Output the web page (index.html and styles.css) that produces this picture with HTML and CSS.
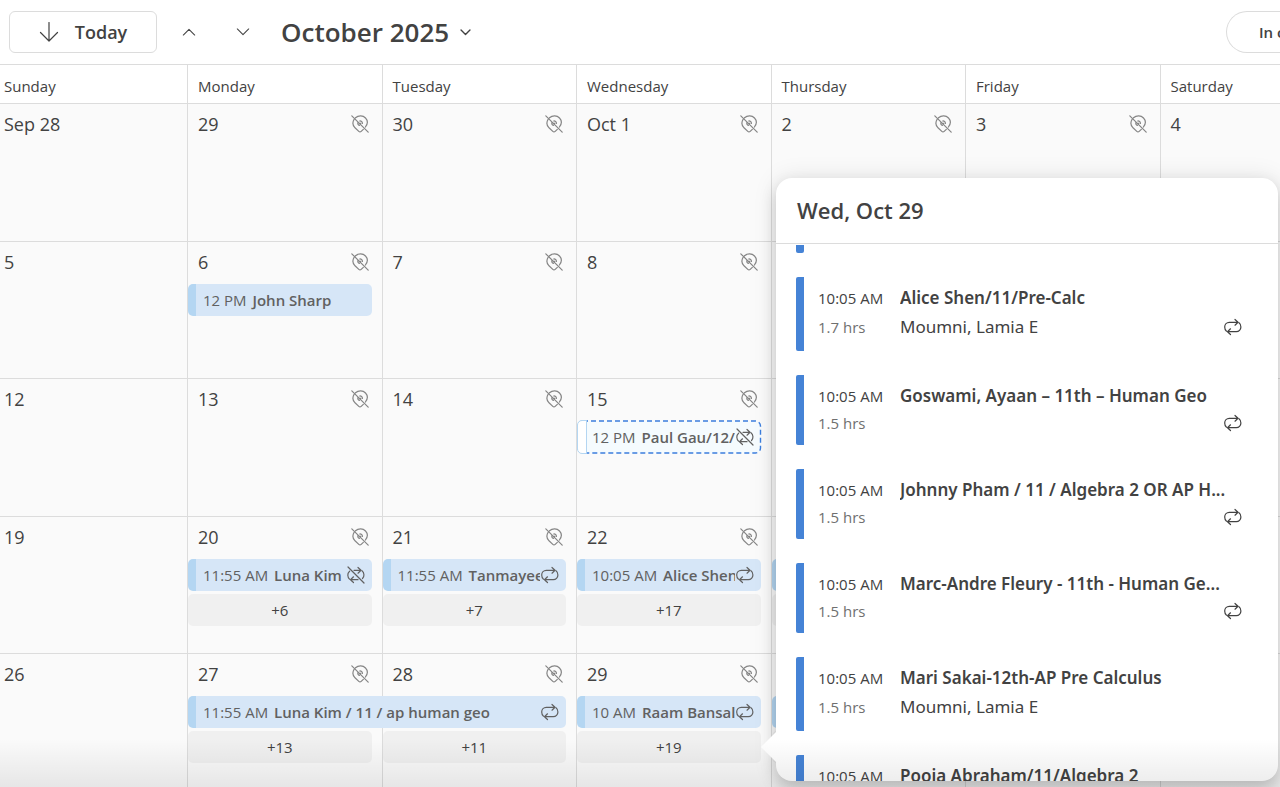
FILE: index.html
```html
<!DOCTYPE html>
<html lang="en">
<head>
<meta charset="utf-8">
<title>Calendar</title>
<link rel="stylesheet" href="styles.css">
</head>
<body>
<svg class="sprite" aria-hidden="true">
  <symbol id="repeat" viewBox="0 0 20 18"><path d="M3.5 13.2C2 12 1.7 10.5 1.7 9C1.7 6.300 3.700 4.300 6.300 4.300H14.500M12 1.500L15 4.300L12 7.200M16 4.800C17.500 6 17.900 7.500 17.900 9C17.900 11.700 15.900 13.700 13.300 13.700H5M7.500 10.800L4.500 13.700L7.500 16.500"/></symbol>
  <symbol id="repeat-off" viewBox="0 0 20 18"><path d="M2 1L18 17M3.500 13.200C1.500 11 1 7.500 3.600 5.200M8 4.300H14.500M12 1.500L15 4.300L12 7.200M16 4.800C18.500 7 18.500 10.500 16.500 12.500M12 13.700H5M7.500 10.800L4.500 13.700L7.500 16.500"/></symbol>
  <symbol id="pin-off" viewBox="0 0 18 18"><path d="M.8.8L17.200 17.200M4.500 2.800C7.500.2 12 .4 14.500 3C17 5.700 16.800 9 14.400 12M3 4.500C1 8 2 10.800 4 12.800L7.800 16.400C8.600 17.200 9.400 17.200 10.200 16.400L12.300 14.400M7 7.300C6.500 8.500 7 10 8.500 10.400M8.700 6C10 5.800 11.500 6.800 11.400 8.500M9 8.400L9.800 8.300"/></symbol>
  <symbol id="chevron" viewBox="0 0 16 16"><path d="M1.500 4.500L8 11L14.500 4.500"/></symbol>
  <symbol id="arrow" viewBox="0 0 20 20"><path d="M10 .5V19M1.500 10.500L10 19L18.500 10.500"/></symbol>
</svg>

<header class="toolbar">
  <button class="today"><svg class="icon arrow"><use href="#arrow"/></svg>Today</button>
  <button class="nav up" aria-label="Previous month"><svg class="icon chev"><use href="#chevron"/></svg></button>
  <button class="nav" aria-label="Next month"><svg class="icon chev"><use href="#chevron"/></svg></button>
  <button class="month">October 2025<svg class="icon chev-small"><use href="#chevron"/></svg></button>
  <button class="filter">In c</button>
</header>

<main class="calendar">
  <div class="weekdays">
    <div>Sunday</div><div>Monday</div><div>Tuesday</div><div>Wednesday</div><div>Thursday</div><div>Friday</div><div>Saturday</div>
  </div>

  <section class="week">
    <div class="day c1">Sep 28</div>
    <div class="day c2">29<svg class="icon pin"><use href="#pin-off"/></svg></div>
    <div class="day c3">30<svg class="icon pin"><use href="#pin-off"/></svg></div>
    <div class="day c4">Oct 1<svg class="icon pin"><use href="#pin-off"/></svg></div>
    <div class="day c5">2<svg class="icon pin"><use href="#pin-off"/></svg></div>
    <div class="day c6">3<svg class="icon pin"><use href="#pin-off"/></svg></div>
    <div class="day c7">4</div>
  </section>

  <section class="week">
    <div class="day c1">5</div>
    <div class="day c2">6<svg class="icon pin"><use href="#pin-off"/></svg></div>
    <div class="day c3">7<svg class="icon pin"><use href="#pin-off"/></svg></div>
    <div class="day c4">8<svg class="icon pin"><use href="#pin-off"/></svg></div>
    <div class="day c5"></div><div class="day c6"></div><div class="day c7"></div>
    <button class="event c2"><span class="label">12 PM <b>John Sharp</b></span></button>
  </section>

  <section class="week">
    <div class="day c1">12</div>
    <div class="day c2">13<svg class="icon pin"><use href="#pin-off"/></svg></div>
    <div class="day c3">14<svg class="icon pin"><use href="#pin-off"/></svg></div>
    <div class="day c4">15<svg class="icon pin"><use href="#pin-off"/></svg></div>
    <div class="day c5"></div><div class="day c6"></div><div class="day c7"></div>
    <button class="event tentative c4"><svg class="outline" aria-hidden="true"><rect width="100%" height="100%" rx="5"/></svg><span class="label">12 PM <b>Paul Gau/12/</b></span><svg class="icon repeat"><use href="#repeat-off"/></svg></button>
  </section>

  <section class="week">
    <div class="day c1">19</div>
    <div class="day c2">20<svg class="icon pin"><use href="#pin-off"/></svg></div>
    <div class="day c3">21<svg class="icon pin"><use href="#pin-off"/></svg></div>
    <div class="day c4">22<svg class="icon pin"><use href="#pin-off"/></svg></div>
    <div class="day c5"></div><div class="day c6"></div><div class="day c7"></div>
    <button class="event c2"><span class="label">11:55 AM <b>Luna Kim</b></span><svg class="icon repeat"><use href="#repeat-off"/></svg></button>
    <button class="event c3"><span class="label">11:55 AM <b>Tanmayee</b></span><svg class="icon repeat"><use href="#repeat"/></svg></button>
    <button class="event c4"><span class="label">10:05 AM <b>Alice Shen</b></span><svg class="icon repeat"><use href="#repeat"/></svg></button>
    <button class="event c5" aria-label="Event"></button>
    <button class="more c2">+6</button>
    <button class="more c3">+7</button>
    <button class="more c4">+17</button>
    <button class="more c5" aria-label="More events"></button>
  </section>

  <section class="week">
    <div class="day c1">26</div>
    <div class="day c2">27<svg class="icon pin"><use href="#pin-off"/></svg></div>
    <div class="day c3">28<svg class="icon pin"><use href="#pin-off"/></svg></div>
    <div class="day c4">29<svg class="icon pin"><use href="#pin-off"/></svg></div>
    <div class="day c5"></div><div class="day c6"></div><div class="day c7"></div>
    <button class="event c2 two-days"><span class="label">11:55 AM <b>Luna Kim / 11 / ap human geo</b></span><svg class="icon repeat"><use href="#repeat"/></svg></button>
    <button class="event c4"><span class="label">10 AM <b>Raam Bansal</b></span><svg class="icon repeat"><use href="#repeat"/></svg></button>
    <button class="event c5" aria-label="Event"></button>
    <button class="more c2">+13</button>
    <button class="more c3">+11</button>
    <button class="more c4">+19</button>
    <button class="more c5" aria-label="More events"></button>
  </section>
</main>

<aside class="popover" aria-labelledby="popover-title">
  <h2 id="popover-title">Wed, Oct 29</h2>
  <div class="agenda">
    <div class="item-end"></div>
    <article class="item">
      <span class="time">10:05 AM</span><h3>Alice Shen/11/Pre-Calc</h3>
      <span class="length">1.7 hrs</span><span class="place">Moumni, Lamia E</span>
      <svg class="icon repeat"><use href="#repeat"/></svg>
    </article>
    <article class="item short">
      <span class="time">10:05 AM</span><h3>Goswami, Ayaan – 11th – Human Geo</h3>
      <span class="length">1.5 hrs</span><svg class="icon repeat"><use href="#repeat"/></svg>
    </article>
    <article class="item short">
      <span class="time">10:05 AM</span><h3>Johnny Pham / 11 / Algebra 2 OR AP H...</h3>
      <span class="length">1.5 hrs</span><svg class="icon repeat"><use href="#repeat"/></svg>
    </article>
    <article class="item short">
      <span class="time">10:05 AM</span><h3>Marc-Andre Fleury - 11th - Human Ge...</h3>
      <span class="length">1.5 hrs</span><svg class="icon repeat"><use href="#repeat"/></svg>
    </article>
    <article class="item">
      <span class="time">10:05 AM</span><h3>Mari Sakai-12th-AP Pre Calculus</h3>
      <span class="length">1.5 hrs</span><span class="place">Moumni, Lamia E</span>
    </article>
    <article class="item">
      <span class="time">10:05 AM</span><h3>Pooja Abraham/11/Algebra 2</h3>
    </article>
  </div>
</aside>
<div class="shade"></div>
</body>
</html>
```

FILE: styles.css
```css
* { box-sizing: border-box; }

body {
  margin: 0;
  height: 100vh;
  display: flex;
  flex-direction: column;
  position: relative;
  overflow: hidden;
  background: #fff;
  color: #424242;
  font-family: "Open Sans", "Noto Sans", sans-serif;
  font-size: 15px;
}

button {
  margin: 0;
  padding: 0;
  border: 0;
  background: none;
  color: inherit;
  font: inherit;
  white-space: nowrap;
}

.sprite { display: none; }

.icon {
  flex: none;
  fill: none;
  stroke: currentColor;
  stroke-width: 1.2;
  stroke-linecap: round;
  stroke-linejoin: round;
}

/* Toolbar */
.toolbar {
  display: flex;
  align-items: center;
  height: 64px;
  flex: none;
  padding-left: 9px;
}

.today {
  display: flex;
  align-items: center;
  justify-content: center;
  gap: 16px;
  width: 148px;
  height: 42px;
  border: 1px solid #dcdcdc;
  border-radius: 6px;
  font-size: 18px;
  font-weight: 600;
}

.arrow { width: 20px; height: 20px; }
.nav { display: flex; width: 14px; margin-left: 25px; }
.nav + .nav { margin-left: 40px; }
.up { transform: rotate(180deg); }
.chev { width: 14px; height: 14px; }

.month {
  display: flex;
  align-items: center;
  gap: 11px;
  margin-left: 31px;
  font-size: 26px;
  font-weight: 600;
}

.chev-small { width: 11px; height: 11px; stroke-width: 2; }

.filter {
  width: 54px;
  height: 42px;
  margin-left: auto;
  padding-left: 32px;
  overflow: hidden;
  border: 1px solid #dcdcdc;
  border-right: 0;
  border-radius: 21px 0 0 21px;
  font-size: 15px;
  font-weight: 600;
  text-align: left;
}

/* Month grid */
.calendar {
  flex: 1;
  min-height: 0;
  display: grid;
  grid-template-rows: 40px repeat(4, 55fr) 53fr;
}

.weekdays,
.week {
  display: grid;
  min-height: 0;
  grid-template-columns: 376fr repeat(5, 389fr) 239fr;
}

.weekdays {
  border-top: 1px solid #dcdcdc;
  border-bottom: 1px solid #dcdcdc;
}

.weekdays > div {
  min-width: 0;
  padding-left: 10px;
  border-right: 1px solid #dcdcdc;
  line-height: 42px;
}

.weekdays > div:first-child { padding-left: 4px; }
.weekdays > div:last-child { border-right: 0; }

.week {
  grid-template-rows: 42px 32px 32px 1fr;
  row-gap: 3px;
  background: #fafafa;
  border-bottom: 1px solid #dcdcdc;
}

.week:last-child { border-bottom: 0; }

.day {
  grid-row: 1 / -1;
  display: flex;
  justify-content: space-between;
  align-items: flex-start;
  min-width: 0;
  padding: 7px 13px 0 10px;
  border-right: 1px solid #dcdcdc;
  font-size: 18px;
  line-height: 26px;
}

.day.c1 { padding-left: 4px; }
.day.c7 { border-right: 0; }

.c1 { grid-column: 1; }
.c2 { grid-column: 2; }
.c3 { grid-column: 3; }
.c4 { grid-column: 4; }
.c5 { grid-column: 5; }
.c6 { grid-column: 6; }
.c7 { grid-column: 7; }
.c2.two-days { grid-column: 2 / span 2; }

.pin {
  width: 18px;
  height: 18px;
  margin-top: 4px;
  color: #858585;
}

.event,
.more {
  min-width: 0;
  margin-right: 11px;
  border-radius: 5px;
}

.event {
  grid-row: 2;
  display: flex;
  align-items: center;
  height: 32px;
  margin-top: -3px;
  padding: 0 6px 0 7px;
  border-left: 8px solid #b4d6f2;
  background: #d6e6f7;
  color: #616161;
  text-align: left;
}

.label { flex: 1; min-width: 0; overflow: hidden; line-height: 28px; }
.event b { margin-left: 2px; font-weight: 600; }
.repeat { width: 20px; height: 18px; }

.tentative {
  position: relative;
  padding-left: 15px;
  border-left: 0;
  background: #f5fbfe;
}

.outline {
  position: absolute;
  top: 0;
  left: 1px;
  width: calc(100% - 1px);
  height: 100%;
  overflow: visible;
  fill: none;
  stroke: #3b7ddd;
  stroke-width: 1.4;
  stroke-dasharray: 5 3;
}

.tentative::before {
  content: "";
  position: absolute;
  z-index: 1;
  left: 0;
  top: -1px;
  bottom: -1px;
  width: 8px;
  border: 1px solid #b4d6f2;
  border-radius: 5px 0 0 5px;
  background: #fff;
}

.more {
  grid-row: 3;
  height: 32px;
  margin-top: -3px;
  background: #f0f0f0;
}

/* Day popover */
.popover {
  position: absolute;
  top: 178px;
  right: 2px;
  bottom: 6px;
  width: 502px;
  display: flex;
  flex-direction: column;
  border-radius: 16px;
  background: #fff;
  box-shadow: 0 8px 16px rgba(0, 0, 0, .17), 0 0 24px rgba(0, 0, 0, .1);
}

.popover::before {
  content: "";
  position: absolute;
  left: -15px;
  bottom: 18px;
  width: 16px;
  height: 32px;
  background: #fff;
  clip-path: polygon(0 50%, 100% 0, 100% 100%);
}

.popover h2 {
  margin: 0;
  padding: 0 21px;
  border-bottom: 1px solid #dcdcdc;
  font-size: 22px;
  font-weight: 600;
  line-height: 65px;
}

.agenda {
  display: flex;
  flex-direction: column;
  gap: 24px;
  min-height: 0;
  margin-top: 1px;
  padding: 0 35px 0 20px;
  overflow: hidden;
  border-radius: 0 0 16px 16px;
}

.item-end {
  flex: none;
  width: 8px;
  height: 8px;
  border-radius: 0 0 2px 2px;
  background: #4583d6;
}

.item {
  flex: none;
  display: grid;
  grid-template-columns: 82px 1fr 20px;
  grid-template-rows: 24px 24px;
  row-gap: 6px;
  padding: 8px 0 12px 22px;
  background: linear-gradient(#4583d6, #4583d6) left / 8px 100% no-repeat;
  border-radius: 2px;
  line-height: 24px;
}

.short { grid-template-rows: 24px 20px; line-height: 20px; }
.item h3 {
  grid-column: 2 / -1;
  margin: 0;
  overflow: hidden;
  font-family: "Noto Sans", "Open Sans", sans-serif;
  font-size: 17px;
  font-weight: 600;
  line-height: 26px;
  white-space: nowrap;
}

.time { line-height: 26px; }
.length { line-height: inherit; color: #707070; }
.place { font-family: "Noto Sans", "Open Sans", sans-serif; font-size: 17px; }
.item .repeat { grid-column: 3; align-self: center; }

/* Fade along the bottom edge */
.shade {
  position: absolute;
  inset: auto 0 0;
  height: 48px;
  background: linear-gradient(transparent, rgba(0, 0, 0, .08));
  pointer-events: none;
}
```
